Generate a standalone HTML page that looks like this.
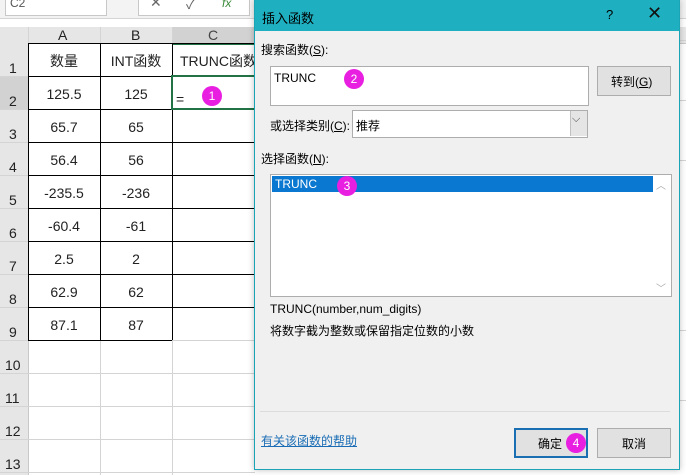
<!DOCTYPE html>
<html><head><meta charset="utf-8"><style>
body{margin:0;width:686px;height:475px;overflow:hidden;background:#fff;font-family:"Liberation Sans","Noto Sans CJK SC",sans-serif;position:relative}
.a{position:absolute}
.t{font-size:14px;color:#222}
.c{font-size:12px;color:#000}
.dot{position:absolute;width:20px;height:20px;border-radius:50%;background:#e81ee0;color:#fff;font-size:12px;text-align:center;line-height:20px}
</style></head><body>
<!-- formula bar -->
<div class="a" style="left:0;top:0;width:686px;height:18px;background:#f3f3f3;border-bottom:1px solid #d4d4d4"></div>
<div class="a" style="left:5px;top:-6px;width:100px;height:20px;background:#fff;border:1px solid #c8c8c8"></div>
<div class="a c" style="left:10px;top:-4px;color:#555">C2</div>
<div class="a" style="left:138px;top:-6px;width:110px;height:20px;background:#fff;border:1px solid #c8c8c8"></div>
<div class="a" style="left:150px;top:-6px;color:#666;font-size:14px">✕</div>
<div class="a" style="left:186px;top:-6px;color:#666;font-size:14px">✓</div>
<div class="a" style="left:222px;top:-4px;color:#3a8a3a;font-size:12px;font-style:italic">fx</div>
<!-- column headers -->
<div class="a" style="left:0;top:27px;width:686px;height:16px;background:#e6e6e6;border-bottom:1px solid #c8c8c8"></div>
<div class="a" style="left:172px;top:27px;width:83px;height:16px;background:#d2d2d2;border-bottom:2px solid #217346"></div>
<div class="a t" style="left:58px;top:27px">A</div>
<div class="a t" style="left:131px;top:27px">B</div>
<div class="a t" style="left:208px;top:27px;color:#444">C</div>
<div class="a" style="left:0;top:43px;width:28px;height:432px;background:#e6e6e6;border-right:1px solid #c8c8c8"></div>
<div class="a" style="left:0;top:76px;width:28px;height:33px;background:#d2d2d2"></div>
<svg class="a" style="left:0;top:0" width="686" height="475">
<g stroke="#d4d4d4" stroke-width="1">
<line x1="100.5" y1="27" x2="100.5" y2="475"/><line x1="172.5" y1="27" x2="172.5" y2="475"/>
<line x1="28.5" y1="27" x2="28.5" y2="43"/>
<line x1="0" y1="340.5" x2="255" y2="340.5"/><line x1="0" y1="373.5" x2="255" y2="373.5"/><line x1="0" y1="406.5" x2="255" y2="406.5"/><line x1="0" y1="439.5" x2="255" y2="439.5"/><line x1="0" y1="472.5" x2="255" y2="472.5"/>
<line x1="0" y1="109.5" x2="28" y2="109.5"/><line x1="0" y1="142.5" x2="28" y2="142.5"/><line x1="0" y1="175.5" x2="28" y2="175.5"/><line x1="0" y1="208.5" x2="28" y2="208.5"/><line x1="0" y1="241.5" x2="28" y2="241.5"/><line x1="0" y1="274.5" x2="28" y2="274.5"/><line x1="0" y1="307.5" x2="28" y2="307.5"/><line x1="0" y1="76.5" x2="28" y2="76.5"/>
<line x1="678" y1="40.5" x2="686" y2="40.5"/><line x1="678" y1="100.5" x2="686" y2="100.5"/><line x1="678" y1="160.5" x2="686" y2="160.5"/><line x1="678" y1="330.5" x2="686" y2="330.5"/><line x1="678" y1="400.5" x2="686" y2="400.5"/>
</g>
<g stroke="#000" stroke-width="1">
<line x1="28" y1="43.5" x2="255" y2="43.5"/>
<line x1="28" y1="76.5" x2="255" y2="76.5"/><line x1="28" y1="109.5" x2="255" y2="109.5"/><line x1="28" y1="142.5" x2="255" y2="142.5"/><line x1="28" y1="175.5" x2="255" y2="175.5"/><line x1="28" y1="208.5" x2="255" y2="208.5"/><line x1="28" y1="241.5" x2="255" y2="241.5"/><line x1="28" y1="274.5" x2="255" y2="274.5"/><line x1="28" y1="307.5" x2="255" y2="307.5"/><line x1="28" y1="340.5" x2="172" y2="340.5"/>
<line x1="28.5" y1="43" x2="28.5" y2="340"/><line x1="100.5" y1="43" x2="100.5" y2="340"/><line x1="172.5" y1="43" x2="172.5" y2="340"/>
</g>
<rect x="172" y="76" width="84" height="33" fill="none" stroke="#217346" stroke-width="2"/>
</svg>
<div class="a t" style="left:9px;top:60px">1</div><div class="a t" style="left:9px;top:93px">2</div><div class="a t" style="left:9px;top:126px">3</div><div class="a t" style="left:9px;top:159px">4</div><div class="a t" style="left:9px;top:192px">5</div><div class="a t" style="left:9px;top:225px">6</div><div class="a t" style="left:9px;top:258px">7</div><div class="a t" style="left:9px;top:291px">8</div><div class="a t" style="left:9px;top:324px">9</div><div class="a t" style="left:5px;top:357px">10</div><div class="a t" style="left:5px;top:390px">11</div><div class="a t" style="left:5px;top:423px">12</div><div class="a t" style="left:5px;top:456px">13</div>
<div class="a t" style="left:28px;width:72px;text-align:center;top:51px">数量</div>
<div class="a t" style="left:100px;width:72px;text-align:center;top:51px">INT函数</div>
<div class="a t" style="left:180px;top:51px;white-space:nowrap">TRUNC函数</div>
<div class="a t" style="left:28px;width:72px;text-align:center;top:86px">125.5</div><div class="a t" style="left:100px;width:72px;text-align:center;top:86px">125</div>
<div class="a t" style="left:28px;width:72px;text-align:center;top:119px">65.7</div><div class="a t" style="left:100px;width:72px;text-align:center;top:119px">65</div>
<div class="a t" style="left:28px;width:72px;text-align:center;top:152px">56.4</div><div class="a t" style="left:100px;width:72px;text-align:center;top:152px">56</div>
<div class="a t" style="left:28px;width:72px;text-align:center;top:185px">-235.5</div><div class="a t" style="left:100px;width:72px;text-align:center;top:185px">-236</div>
<div class="a t" style="left:28px;width:72px;text-align:center;top:218px">-60.4</div><div class="a t" style="left:100px;width:72px;text-align:center;top:218px">-61</div>
<div class="a t" style="left:28px;width:72px;text-align:center;top:251px">2.5</div><div class="a t" style="left:100px;width:72px;text-align:center;top:251px">2</div>
<div class="a t" style="left:28px;width:72px;text-align:center;top:284px">62.9</div><div class="a t" style="left:100px;width:72px;text-align:center;top:284px">62</div>
<div class="a t" style="left:28px;width:72px;text-align:center;top:317px">87.1</div><div class="a t" style="left:100px;width:72px;text-align:center;top:317px">87</div>
<div class="a t" style="left:176px;top:91px">=</div>
<div class="dot" style="left:202px;top:86px">1</div>
<!-- dialog -->
<div class="a" style="left:254px;top:0;width:424px;height:468px;background:#f0f0f0;border:1px solid #1aa4b5;box-shadow:0 0 6px rgba(0,0,0,.25)"></div>
<div class="a" style="left:255px;top:0;width:424px;height:31px;background:#1eb0c0"></div>
<div class="a c" style="left:262px;top:8px;font-size:13px">插入函数</div>
<div class="a c" style="left:606px;top:7px;font-size:13px">?</div>
<div class="a" style="left:647px;top:3px;font-size:18px;color:#111">✕</div>
<div class="a c" style="left:261px;top:41px">搜索函数(<u>S</u>):</div>
<div class="a" style="left:270px;top:66px;width:317px;height:38px;background:#fff;border:1px solid #adadad"></div>
<div class="a c" style="left:274px;top:71px">TRUNC</div>
<div class="dot" style="left:344px;top:69px">2</div>
<div class="a" style="left:597px;top:66px;width:72px;height:28px;background:#e1e1e1;border:1px solid #adadad"></div>
<div class="a c" style="left:611px;top:73px">转到(<u>G</u>)</div>
<div class="a c" style="left:270px;top:117px">或选择类别(<u>C</u>):</div>
<div class="a" style="left:352px;top:110px;width:234px;height:26px;background:#fff;border:1px solid #adadad"></div>
<div class="a" style="left:570px;top:111px;width:16px;height:25px;background:#e5e5e5;border-left:1px solid #c0c0c0"></div>
<div class="a" style="left:572px;top:113px;font-size:11px;color:#444">⌵</div>
<div class="a c" style="left:356px;top:117px">推荐</div>
<div class="a c" style="left:261px;top:150px">选择函数(<u>N</u>):</div>
<div class="a" style="left:270px;top:174px;width:400px;height:121px;background:#fff;border:1px solid #adadad"></div>
<div class="a" style="left:272px;top:176px;width:381px;height:16px;background:#0a78d0"></div>
<div class="a c" style="left:275px;top:177px;color:#fff">TRUNC</div>
<div class="dot" style="left:337px;top:176px">3</div>
<div class="a" style="left:656px;top:177px;font-size:10px;color:#aaa">︿</div>
<div class="a" style="left:656px;top:280px;font-size:10px;color:#aaa">﹀</div>
<div class="a c" style="left:270px;top:302px">TRUNC(number,num_digits)</div>
<div class="a c" style="left:270px;top:322px">将数字截为整数或保留指定位数的小数</div>
<div class="a" style="left:260px;top:411px;width:410px;height:1px;background:#dcdcdc"></div>
<div class="a c" style="left:261px;top:432px;color:#1a6db5;text-decoration:underline">有关该函数的帮助</div>
<div class="a" style="left:514px;top:428px;width:70px;height:26px;background:#e1e1e1;border:2px solid #1a6fb3"></div>
<div class="a c" style="left:538px;top:435px">确定</div>
<div class="dot" style="left:566px;top:433px">4</div>
<div class="a" style="left:597px;top:428px;width:72px;height:28px;background:#e1e1e1;border:1px solid #adadad"></div>
<div class="a c" style="left:622px;top:435px">取消</div>
</body></html>
